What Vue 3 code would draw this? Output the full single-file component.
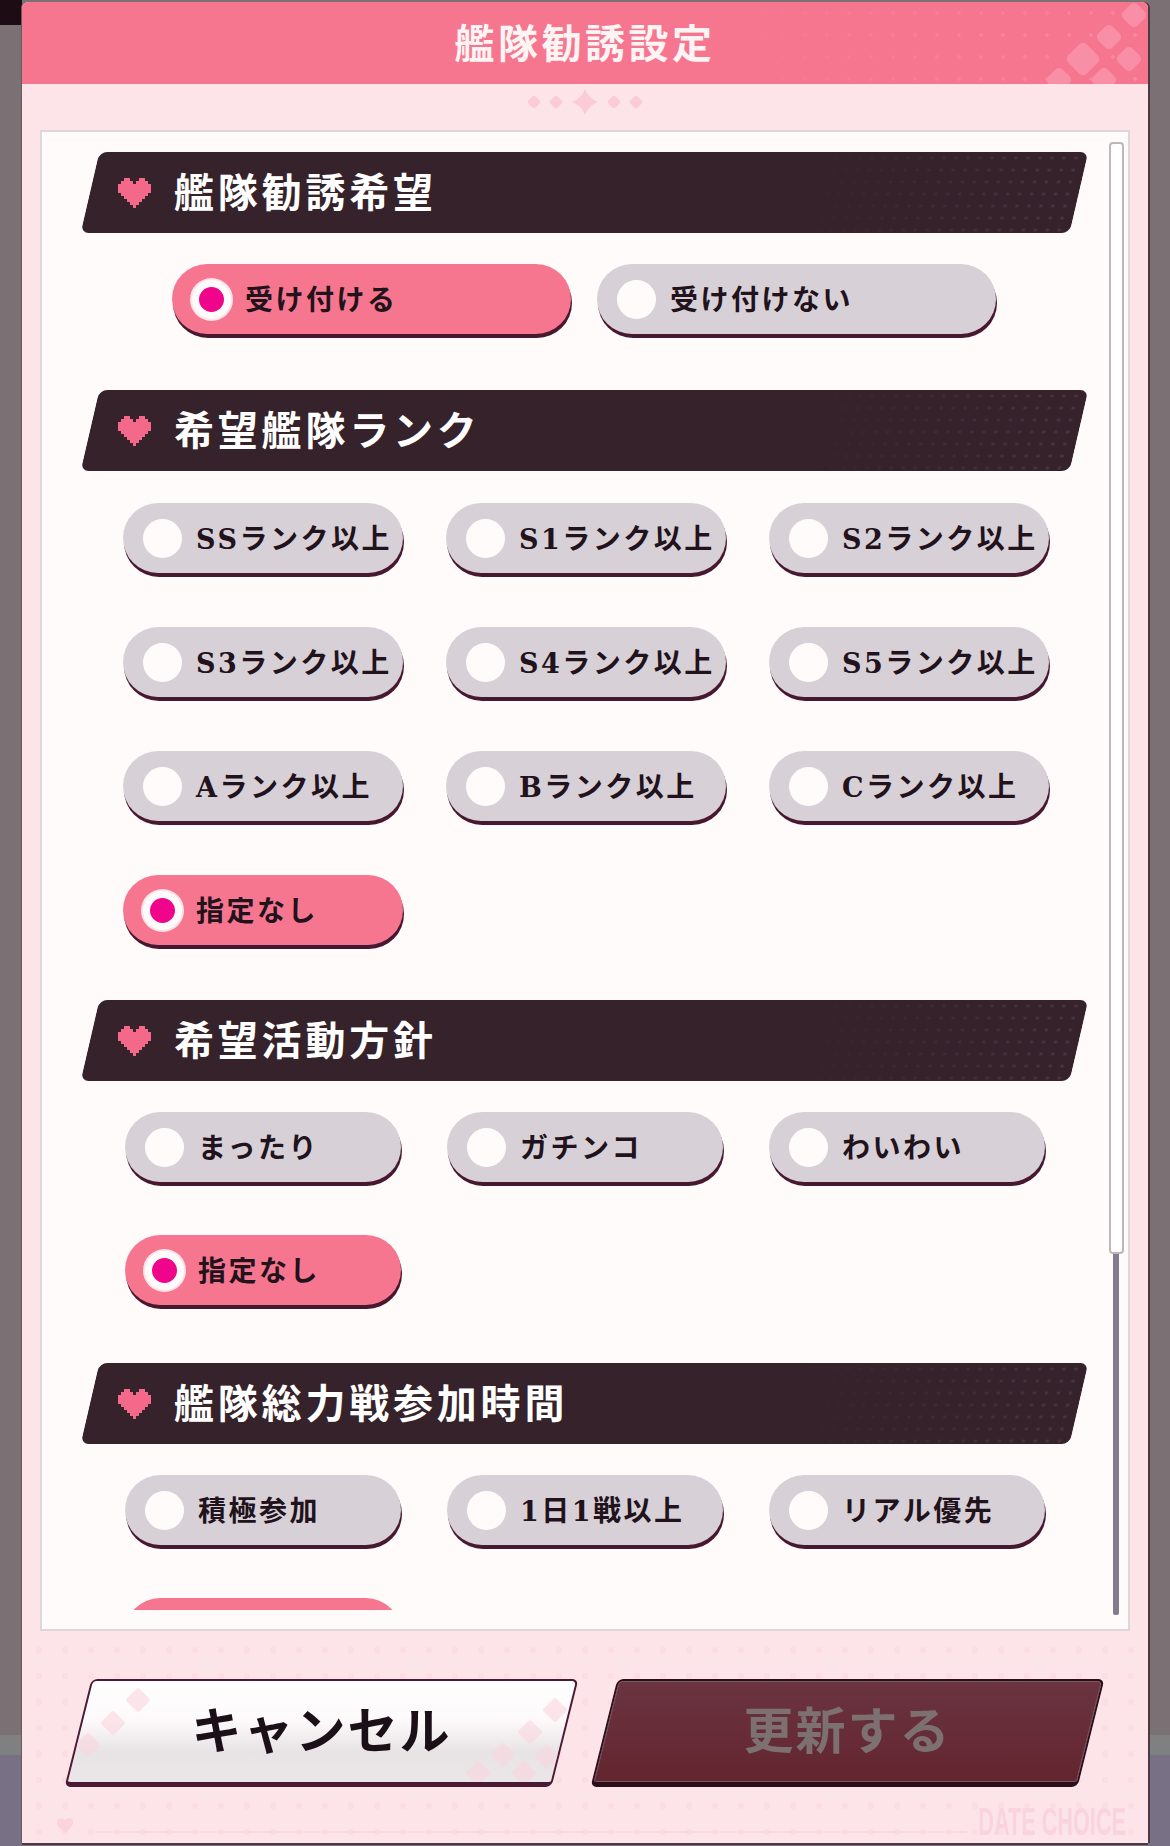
<template>
  <div class="page">
    <div class="panel">
      <header class="head">
        <svg class="head-deco" viewBox="0 0 240 82" width="240" height="82">
          <g fill="#f98fa6">
            <rect v-for="d in headDiamonds" :key="d.x + '-' + d.y" :x="d.x - d.s" :y="d.y - d.s" :width="d.s * 2" :height="d.s * 2" rx="5" :transform="`rotate(45 ${d.x} ${d.y})`" />
          </g>
        </svg>
        <h1>艦隊勧誘設定</h1>
      </header>

      <div class="ornament">
        <svg viewBox="0 0 130 30" width="130" height="30">
          <g fill="#fccbd8">
            <rect x="9" y="10" width="10" height="10" rx="2" transform="rotate(45 14 15)" />
            <rect x="31" y="10" width="10" height="10" rx="2" transform="rotate(45 36 15)" />
            <path d="M65 2 Q68 11 78 15 Q68 19 65 28 Q62 19 52 15 Q62 11 65 2 Z" />
            <rect x="89" y="10" width="10" height="10" rx="2" transform="rotate(45 94 15)" />
            <rect x="111" y="10" width="10" height="10" rx="2" transform="rotate(45 116 15)" />
          </g>
        </svg>
      </div>

      <div class="box">
        <div class="scroll">
          <section v-for="s in sections" :key="s.title" class="section" :class="s.layout">
            <h2 class="bar">
              <svg class="heart" viewBox="0 0 11 10" width="33" height="30">
                <path d="M2 0H4V1H5V2H6V1H7V0H9V1H10V2H11V5H10V6H9V7H8V8H7V9H6V10H5V9H4V8H3V7H2V6H1V5H0V2H1V1H2Z" fill="#f4698a" />
              </svg>
              <span>{{ s.title }}</span>
            </h2>
            <div class="opts">
              <div v-for="o in s.options" :key="o" class="pill" :class="{ on: o === s.selected }">
                <i class="radio"></i>
                <span class="label">
                  <template v-for="(part, i) in splitLabel(o)" :key="i">
                    <b v-if="isLatin(part)" class="latin">{{ part }}</b>
                    <template v-else>{{ part }}</template>
                  </template>
                </span>
              </div>
            </div>
          </section>
        </div>
        <div class="track"></div>
        <div class="thumb"></div>
      </div>

      <footer class="foot">
        <button class="action cancel">
          <span class="shape">
            <svg viewBox="0 0 513 108" width="513" height="108">
              <g fill="#f8d5de" fill-opacity="0.6">
                <rect v-for="d in btnDiamonds" :key="d.x + '-' + d.y" :x="d.x - 9" :y="d.y - 9" width="18" height="18" rx="2" :transform="`rotate(45 ${d.x} ${d.y})`" />
              </g>
            </svg>
          </span>
          <span class="action-text">キャンセル</span>
        </button>
        <button class="action update">
          <span class="shape"></span>
          <span class="action-text">更新する</span>
        </button>
        <svg class="foot-heart" viewBox="0 0 20 18" width="16" height="15">
          <path d="M10 18 C4 13 0 10 0 5 C0 2 2 0 5 0 C7 0 9 1 10 3 C11 1 13 0 15 0 C18 0 20 2 20 5 C20 10 16 13 10 18 Z" fill="#fbd3dc" />
        </svg>
        <div class="foot-line"></div>
        <div class="brand">DATE CHOICE</div>
      </footer>
    </div>
  </div>
</template>

<script setup>
const sections = [
  {
    title: '艦隊勧誘希望',
    layout: 'two',
    options: ['受け付ける', '受け付けない'],
    selected: '受け付ける',
  },
  {
    title: '希望艦隊ランク',
    layout: 'rank',
    options: [
      'SSランク以上',
      'S1ランク以上',
      'S2ランク以上',
      'S3ランク以上',
      'S4ランク以上',
      'S5ランク以上',
      'Aランク以上',
      'Bランク以上',
      'Cランク以上',
      '指定なし',
    ],
    selected: '指定なし',
  },
  {
    title: '希望活動方針',
    layout: 'plain',
    options: ['まったり', 'ガチンコ', 'わいわい', '指定なし'],
    selected: '指定なし',
  },
  {
    title: '艦隊総力戦参加時間',
    layout: 'plain',
    options: ['積極参加', '1日1戦以上', 'リアル優先', '指定なし'],
    selected: '指定なし',
  },
];

const headDiamonds = [
  { x: 226, y: 13, s: 10 },
  { x: 201, y: 35, s: 10 },
  { x: 175, y: 57, s: 13 },
  { x: 221, y: 57, s: 10 },
  { x: 151, y: 78, s: 10 },
  { x: 196, y: 78, s: 10 },
];

const btnDiamonds = [
  { x: 73, y: 21 },
  { x: 48, y: 44 },
  { x: 23, y: 66 },
  { x: 490, y: 31 },
  { x: 465, y: 53 },
  { x: 438, y: 76 },
  { x: 482, y: 78 },
  { x: 413, y: 94 },
  { x: 459, y: 94 },
];

function splitLabel(label) {
  return label.match(/[A-Z0-9]+|[^A-Z0-9]+/g);
}

function isLatin(part) {
  return /^[A-Z0-9]+$/.test(part);
}
</script>

<style scoped>
.page {
  width: 1170px;
  height: 1846px;
  overflow: hidden;
  box-sizing: border-box;
  padding: 2px 22px 3px;
  font-family: "Noto Sans CJK JP", "Noto Sans", sans-serif;
  background:
    linear-gradient(#1e0c15, #1e0c15) 0 0 / 22px 25px no-repeat,
    linear-gradient(180deg, #7b7175 0, #7b7175 1735px, #7f8080 1735px, #7f8080 1755px, #787084 1755px);
}

.panel {
  height: 100%;
  display: flex;
  flex-direction: column;
  background: #fde4e9;
  border-radius: 6px 6px 0 0;
  box-shadow: 2px 0 0 #4b3a42, -1px 0 0 #6b5a60, 0 2px 0 #4b3a42;
}

.head {
  position: relative;
  height: 82px;
  flex: none;
  overflow: hidden;
  border-radius: 6px 6px 0 0;
  background: #f7768f;
  display: flex;
  align-items: center;
  justify-content: center;
}

.head::after {
  content: '';
  position: absolute;
  top: 0;
  right: 0;
  bottom: 0;
  width: 420px;
  background-image: radial-gradient(circle, #f98aa2 1.5px, transparent 2px);
  background-size: 22px 22px;
  -webkit-mask-image: linear-gradient(90deg, transparent, #000);
  mask-image: linear-gradient(90deg, transparent, #000);
}

.head h1 {
  margin: -5px 0 0;
  color: #fff4f4;
  font-size: 40px;
  font-weight: 700;
  letter-spacing: 3.5px;
  line-height: 1;
}

.head-deco {
  position: absolute;
  top: 0;
  right: 0;
  z-index: 1;
}

.ornament {
  height: 46px;
  flex: none;
  display: flex;
  align-items: flex-start;
  justify-content: center;
  padding-top: 3px;
  box-sizing: border-box;
}

.box {
  position: relative;
  flex: none;
  height: 1501px;
  margin: 0 18px;
  box-sizing: border-box;
  border: 2px solid #ded6d9;
  background: #fffbfa;
  padding: 20px 0 0;
}

.scroll {
  height: 1458px;
  overflow: hidden;
}

.bar {
  position: relative;
  display: flex;
  align-items: center;
  gap: 23px;
  width: 1008px;
  height: 81px;
  margin: 0 0 0 39px;
  padding-left: 37px;
  box-sizing: border-box;
  color: #fff;
  font-size: 40px;
  font-weight: 700;
  letter-spacing: 3.8px;
  line-height: 1;
}

.bar::before {
  content: '';
  position: absolute;
  top: 0;
  bottom: 0;
  left: 9px;
  right: 10px;
  border-radius: 8px;
  transform: skewX(-13deg);
  background-color: #35222b;
  background-image:
    linear-gradient(90deg, #35222b 72%, rgba(53, 34, 43, 0) 100%),
    radial-gradient(circle, #4a3540 1.5px, transparent 2px);
  background-size: 100% 100%, 12px 12px;
}

.bar .heart,
.bar span {
  position: relative;
  z-index: 1;
  flex: none;
}

.bar span {
  margin-top: -5px;
}

.two {
  padding-bottom: 56px;
}

.rank {
  padding-bottom: 55px;
}

.plain {
  padding-bottom: 58px;
}

.opts {
  display: grid;
  margin-top: 32px;
}

.two .opts {
  margin-top: 31px;
  grid-template-columns: repeat(2, 399px);
  column-gap: 26px;
  margin-left: 130px;
}

.rank .opts {
  grid-template-columns: repeat(3, 280px);
  column-gap: 43px;
  row-gap: 54px;
  margin-left: 81px;
}

.plain .opts {
  margin-top: 31px;
  grid-template-columns: repeat(3, 276px);
  column-gap: 46px;
  row-gap: 53px;
  margin-left: 83px;
}

.pill {
  display: flex;
  align-items: center;
  height: 70px;
  padding-left: 20px;
  border-radius: 35px;
  background: #d8d0d7;
  box-shadow: 1px 4px 0 #47182f;
  color: #21121c;
  font-size: 28px;
  font-weight: 700;
  letter-spacing: 2.5px;
}

.pill.on {
  background: #f7768f;
}

.radio {
  width: 39px;
  height: 39px;
  flex: none;
  margin-right: 14px;
  border-radius: 50%;
  box-sizing: border-box;
  background: #fffbfb;
}

.pill.on .radio {
  border: 7px solid #fffbfb;
  background: #f0048c;
  box-shadow: 0 0 0 2px #fde4ea;
}

.label {
  margin-top: -3px;
  white-space: nowrap;
}

.latin {
  font-family: "DejaVu Serif", serif;
  font-weight: 700;
  font-size: 27px;
}

.track {
  position: absolute;
  top: 11px;
  left: 1071px;
  width: 6px;
  height: 1472px;
  border-radius: 0 0 2px 2px;
  background: #827c90;
}

.thumb {
  position: absolute;
  top: 10px;
  left: 1067px;
  width: 15px;
  height: 1112px;
  box-sizing: border-box;
  border: 2px solid #bdb6ba;
  border-radius: 4px;
  background: #fff;
}

.foot {
  position: relative;
  flex: 1;
  display: flex;
  align-items: flex-start;
  gap: 13px;
  padding: 48px 0 0 43px;
  background-image: radial-gradient(circle, #fcdde4 3px, transparent 3.5px);
  background-size: 26px 26px;
  background-position: 4px 6px;
}

.action {
  position: relative;
  width: 513px;
  height: 108px;
  padding: 0 0 12px;
  border: 0;
  background: none;
  font-family: inherit;
  font-size: 50px;
  letter-spacing: 2px;
  line-height: 1;
  display: flex;
  align-items: center;
  justify-content: center;
}

.shape {
  position: absolute;
  top: 0;
  bottom: 0;
  left: 13px;
  right: 13px;
  box-sizing: border-box;
  overflow: hidden;
  border-radius: 6px;
  transform: skewX(-14deg);
}

.shape svg {
  position: absolute;
  top: -2px;
  left: -15px;
  transform: skewX(14deg);
}

.action-text {
  position: relative;
}

.cancel .shape {
  border: 2px solid #4a1a35;
  border-bottom-width: 5px;
  background: linear-gradient(180deg, #fff 0%, #fdf9fa 40%, #e8e3e5 70%, #ebe6e8 100%);
}

.cancel .action-text {
  color: #1b1017;
  font-weight: 700;
}

.update .shape {
  border: 2px solid #2c0e1a;
  border-bottom-width: 5px;
  background: linear-gradient(180deg, #6a3440 0%, #632530 100%);
  box-shadow: inset 0 0 0 1px #7b5a62;
}

.update .action-text {
  color: #7c7070;
  font-weight: 700;
}

.foot-heart {
  position: absolute;
  left: 35px;
  bottom: 10px;
}

.foot-line {
  position: absolute;
  left: 73px;
  right: 181px;
  bottom: 10px;
  height: 2px;
  background: #f9d9e0;
}

.brand {
  position: absolute;
  right: 22px;
  bottom: 7px;
  color: #f9d3dd;
  font-family: "Liberation Sans", sans-serif;
  font-size: 38px;
  font-weight: 700;
  line-height: 28px;
  white-space: nowrap;
  transform: scaleX(0.57);
  transform-origin: right center;
}
</style>
